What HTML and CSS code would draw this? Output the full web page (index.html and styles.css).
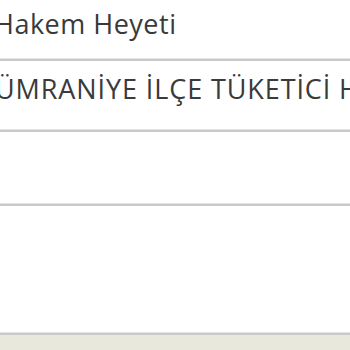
FILE: index.html
```html
<!DOCTYPE html>
<html lang="tr">
<head>
    <meta charset="UTF-8">
    <title>Hakem Heyeti</title>
    <link rel="stylesheet" href="styles.css">
</head>
<body>
<div class="panel">
    <div class="row row-head">Hakem Heyeti</div>
    <div class="row row-name">ÜMRANİYE İLÇE TÜKETİCİ HAKEM HEYETİ</div>
    <div class="row row-empty"></div>
    <div class="row row-fill"></div>
    <div class="footer"></div>
</div>
</body>
</html>
```

FILE: styles.css
```css
html, body { margin: 0; padding: 0; background: #fff; }
body { font-family: "Open Sans", "Noto Sans", sans-serif; color: #3a3a3a; overflow: hidden; }
.panel { width: 350px; height: 350px; display: flex; flex-direction: column; overflow: hidden; }
.row { white-space: nowrap; overflow: hidden; border-bottom: 2px solid #c9c9c9; box-shadow: 0 -1px 0 #e4e4e4 inset; flex: none; }
.row-head { font-size: 27px; line-height: 38px; height: 38px; padding: 5px 0 16px 0; text-indent: -6px; letter-spacing: 0.5px; }
.row-name { font-size: 27px; line-height: 38px; height: 38px; padding: 9px 0 22px 0; text-indent: -5px; letter-spacing: 0.9px; }
.row-empty { height: 72px; }
.row-fill { height: 127px; }
.footer { flex: 1; background: #e8e9dc; }
```
